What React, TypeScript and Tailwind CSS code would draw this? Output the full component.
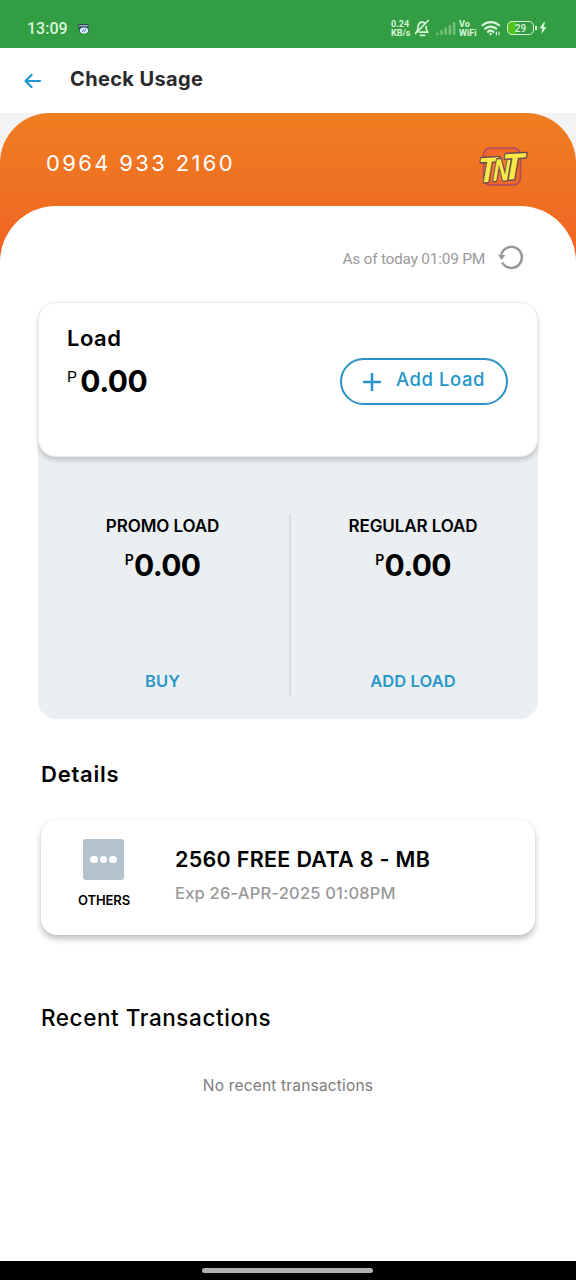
import React from 'react';

const SilentBell = () => (
  <svg width="16" height="18" viewBox="0 0 16 18" fill="none" stroke="#d9f5da" strokeWidth="1.7" strokeLinecap="round" strokeLinejoin="round">
    <path d="M2.500 13.200c1.500-1.500 1.200-3 1.500-5.200C4.400 4.800 6 3.200 8.200 3.200c1 0 1.800.3 2.500.9M12 7.500c.1 2.500.4 4 1.800 5.700H5.500" />
    <path d="M14.300 1.500L1.500 14.500M6.500 16.300h4" />
  </svg>
);

const SignalBars = () => (
  <svg width="20" height="14" viewBox="0 0 20 14" fill="#77bf7b">
    <rect x="0" y="10.500" width="2.600" height="2.500" rx="1" />
    <rect x="4.200" y="8" width="2.600" height="5" rx="1" />
    <rect x="8.400" y="5.500" width="2.600" height="7.500" rx="1" />
    <rect x="12.600" y="3" width="2.600" height="10" rx="1" />
    <rect x="16.800" y="0" width="2.600" height="13" rx="1" />
  </svg>
);

const WifiIcon = () => (
  <svg width="20" height="16" viewBox="0 0 20 16" fill="none" stroke="#d9f5da" strokeWidth="2.200" strokeLinecap="round">
    <path d="M1.500 5.200a12.500 12.500 0 0 1 16.600 0" />
    <path d="M4.200 8.700a8.500 8.500 0 0 1 11 0" />
    <path d="M6.900 11.800a4.500 4.500 0 0 1 5.500 0" />
    <circle cx="9.600" cy="14" r="1.200" fill="#d9f5da" stroke="none" />
    <path d="M15.400 12v2.800M18 12v2.800" strokeWidth="1.200" />
  </svg>
);

const TntLogo = () => (
  <svg className="overflow-visible" width="56" height="44" viewBox="0 0 56 44">
    <defs>
      <radialGradient id="tnt">
        <stop offset="0" stopColor="#fb8a2a" />
        <stop offset="1" stopColor="#f1642a" />
      </radialGradient>
    </defs>
    <rect x="7.500" y="3" width="37" height="37" rx="7" fill="url(#tnt)" stroke="#a84c62" strokeWidth="1.500" />
    <g fontFamily="Liberation Sans" fontWeight="bold" fill="#fbe945" stroke="#6b4a56" strokeWidth="2.800" strokeLinejoin="round" style={{ paintOrder: 'stroke' }}>
      <text transform="translate(.5 37.500) rotate(-3) skewX(-13) scale(.88 1)" fontSize="35">T</text>
      <text transform="translate(15.500 36) rotate(-3) skewX(-13) scale(.76 1)" fontSize="31">N</text>
      <text transform="translate(24.500 35) rotate(-3) skewX(-13) scale(.96 1)" fontSize="37">T</text>
    </g>
  </svg>
);

const StatusBar = () => (
  <div className="flex h-12 items-start bg-[#339d43] text-[#d9f5da]">
    <span className="ml-[27px] mt-[18px] w-[51px] font-['Roboto'] text-[16px] font-medium leading-[22px]">13:09</span>
    <svg className="mt-6" width="11" height="10" viewBox="0 0 11 10">
      <path d="M0 0h10.500v9H1.500z" fill="#2c4a5c" />
      <path d="M1 1.800h9" stroke="#c9dbe2" />
      <ellipse cx="6" cy="6.500" rx="4.200" ry="3" fill="#e6f1ff" />
      <path d="M4 8l2-3M6 8l2-3" stroke="#3e7fd8" />
    </svg>
    <div className="ml-[302px] mt-5 w-[23px] font-['Roboto'] text-[9px] font-bold leading-[9px]">
      <p>0.24</p>
      <p>KB/s</p>
    </div>
    <div className="mt-[19px]"><SilentBell /></div>
    <div className="ml-[6px] mt-[22px]"><SignalBars /></div>
    <div className="ml-[3px] mt-5 w-[22px] font-['Roboto'] text-[9px] font-bold leading-[9px]">
      <p>Vo</p>
      <p>WiFi</p>
    </div>
    <div className="mt-5"><WifiIcon /></div>
    <div className="ml-[6px] mt-[21px] flex h-[14px] w-[27px] items-center justify-center rounded-[5px] border-[1.500px] border-[#d9f5da] bg-linear-to-r from-[#52c41a] from-30% to-transparent to-30% font-['Roboto'] text-[10px] font-medium">29</div>
    <div className="ml-px mt-[26px] h-1 w-[1.500px] bg-[#d9f5da]" />
    <svg className="ml-[2px] mt-[22px]" width="8" height="12" viewBox="0 0 8 12" fill="#d9f5da">
      <path d="M5 0L.5 6.300h2.700L2.500 12 7.500 5H4.700L6 0z" />
    </svg>
  </div>
);

const LoadColumn = ({ title, action }: { title: string; action: string }) => (
  <div className="flex flex-col items-center">
    <p className="mt-[2px] text-[17px] font-semibold leading-5 tracking-[-0.1px]">{title}</p>
    <p className="mt-[14px] flex text-[30px] font-bold leading-[30px] tracking-[-0.7px]">
      <span className="mt-[2px] mr-px text-[14px] font-semibold leading-4">P</span>0.00
    </p>
    <button className="mt-[91px] text-[16.500px] font-semibold leading-5 tracking-[0.1px] text-[#2a97cb]">{action}</button>
  </div>
);

const App: React.FC = () => (
  <div className="flex h-[1280px] w-[576px] flex-col overflow-hidden bg-white font-['Inter',sans-serif] text-black">
    <StatusBar />

    {/* Header */}
    <div className="flex h-[65px] items-start">
      <svg className="ml-6 mt-[26px]" width="18" height="14" viewBox="0 0 18 14" fill="none" stroke="#1f97cc" strokeWidth="2.200" strokeLinecap="round" strokeLinejoin="round">
        <path d="M7.500 1L1.500 7l6 6M1.500 7H16" />
      </svg>
      <h1 className="ml-[28px] mt-[19px] text-[20px] font-bold leading-6 tracking-[0.36px] text-[#2a2a2c]">Check Usage</h1>
    </div>

    <div className="flex-1 bg-[#f3f3f3]">
      <div className="h-full rounded-t-[50px] bg-[linear-gradient(#ef7e21_0px,#ef6e23_90px,#f26224_150px)]">
        <div className="flex h-[93px] items-start justify-between pl-[46px] pr-11">
          <p className="mt-[38px] text-[22px] leading-6 tracking-[2.350px] text-white">0964 933 2160</p>
          <div className="mt-8"><TntLogo /></div>
        </div>

        <div className="h-[1055px] rounded-t-[56px] bg-white">
          <div className="flex h-24 items-start justify-end pr-[53px] font-['Roboto'] text-[15.500px] leading-5 text-[#9b9b9b]">
            <span className="mt-[43px] tracking-[-0.260px]">As of today 01:09 PM</span>
            <svg className="ml-[13px] mt-[39px]" width="25" height="25" viewBox="0 0 25 25" fill="none" stroke="#999" strokeWidth="2.500">
              <path d="M4.200 17.500A10.500 10.500 0 1 0 3.300 9.500" />
              <path d="M0 9.500l7.500.5-4.200 5z" fill="#999" stroke="none" />
            </svg>
          </div>

          {/* Load balance */}
          <div className="mx-[38px] h-[417px] rounded-[18px] bg-[#ebeff2]">
            <div className="flex h-[155px] items-start justify-between rounded-[18px] border border-[#ededed] bg-white pl-7 pr-[29px] shadow-[0_3px_5px_rgba(0,0,0,0.18)]">
              <div>
                <h2 className="mt-[23px] text-[22px] font-semibold leading-6 tracking-[0.500px]">Load</h2>
                <p className="mt-4 flex text-[30px] font-bold leading-[30px] tracking-[-0.5px]">
                  <span className="mr-1 mt-[3px] font-['Roboto'] text-[15.500px] font-normal leading-4">P</span>0.00
                </p>
              </div>
              <button className="mt-[55px] flex h-[47px] w-[168px] items-center rounded-full border-2 border-[#2a93c4] pl-[21px] text-[#2596ca]">
                <svg width="18" height="18" viewBox="0 0 18 18" stroke="currentColor" strokeWidth="2.500" strokeLinecap="round">
                  <path d="M9 1v16M1 9h16" />
                </svg>
                <span className="-mt-[5px] ml-[15px] whitespace-nowrap text-[18.500px] font-medium leading-6 tracking-[0.550px]">Add Load</span>
              </button>
            </div>
            <div className="mt-[57px] grid h-[183px] grid-cols-[249px_2px_240px] gap-x-[2px]">
              <LoadColumn title="PROMO LOAD" action="BUY" />
              <div className="bg-[#d9dddf]" />
              <LoadColumn title="REGULAR LOAD" action="ADD LOAD" />
            </div>
          </div>

          {/* Details */}
          <h2 className="ml-[41px] mt-[43px] text-[22px] font-semibold leading-6 tracking-[0.750px]">Details</h2>
          <div className="mx-[41px] mt-[34px] flex h-[115px] items-start rounded-[16px] bg-white shadow-[0_4px_6px_rgba(0,0,0,0.25),0_0_2px_rgba(0,0,0,0.06)]">
            <div className="ml-8 mt-[19px] flex w-[61px] flex-col items-center">
              <div className="flex h-[41px] w-[41px] items-center justify-center gap-[2px] rounded-[3px] bg-[#b2c3ce]">
                <span className="h-[7.500px] w-[7.500px] rounded-full bg-white" />
                <span className="h-[7.500px] w-[7.500px] rounded-full bg-white" />
                <span className="h-[7.500px] w-[7.500px] rounded-full bg-white" />
              </div>
              <p className="mt-3 pl-px text-[13px] font-semibold leading-4 tracking-[-0.1px]">OTHERS</p>
            </div>
            <div className="ml-[41px] mt-[27px] whitespace-nowrap">
              <p className="text-[21.500px] font-semibold leading-6 tracking-[0.300px]">2560 FREE DATA 8 - MB</p>
              <p className="mt-[11px] text-[16.500px] font-medium leading-[22px] tracking-[0.200px] text-[#999]">Exp 26-APR-2025 01:08PM</p>
            </div>
          </div>

          {/* Recent transactions */}
          <h2 className="ml-[41px] mt-[71px] text-[22.500px] font-medium leading-6 tracking-[0.560px]">Recent Transactions</h2>
          <p className="mt-[46px] text-center text-[15.500px] leading-5 tracking-[0.180px] text-[#7c7c7c]">No recent transactions</p>
        </div>
      </div>
    </div>

    {/* System navigation */}
    <div className="flex h-[19px] bg-black pl-[202px] pt-[7px]">
      <div className="h-[5px] w-[171px] rounded-full bg-[#b1b1b1]" />
    </div>
  </div>
);

export default App;
